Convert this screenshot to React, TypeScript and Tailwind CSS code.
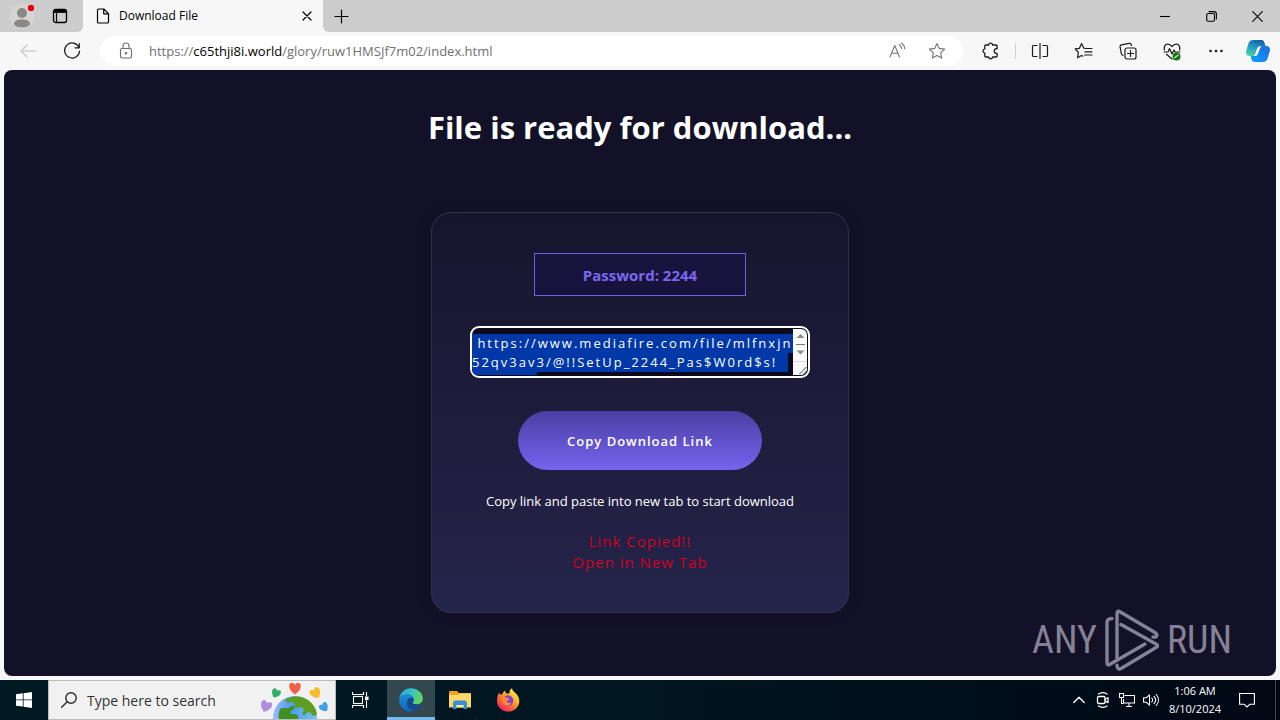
import { useEffect, useRef, type ReactNode } from "react";

const LINK = " https://www.mediafire.com/file/mlfnxjn\n52qv3av3/@!!SetUp_2244_Pas$W0rd$s! \n\u00a0\u00a0\u00a0\u00a0\u00a0\u00a0\u00a0\u00a0\u00a0\u00a0\u00a0\u00a0";

function Stroke({ size = 20, className = "", children }: { size?: number; className?: string; children: ReactNode }) {
  return (
    <svg
      width={size}
      height={size}
      viewBox={`0 0 ${size} ${size}`}
      fill="none"
      stroke="currentColor"
      strokeWidth="1.1"
      strokeLinecap="round"
      strokeLinejoin="round"
      className={className}
      aria-hidden="true"
    >
      {children}
    </svg>
  );
}

function ToolButton({ label, className = "", children }: { label: string; className?: string; children: ReactNode }) {
  return (
    <button type="button" aria-label={label} className={`flex h-8 w-11 shrink-0 items-center justify-center ${className}`}>
      {children}
    </button>
  );
}

function TabStrip() {
  return (
    <header className="flex h-8 bg-[#cccccc] text-black">
      <div className="flex flex-1 bg-[#f7f7f7]">
        <div className="flex w-[83px] shrink-0 items-center rounded-br-md bg-[#cccccc]">
          <button type="button" aria-label="Profile" className="flex h-8 w-11 items-center justify-center">
            <svg width="28" height="28" viewBox="0 0 28 28" aria-hidden="true">
              <circle cx="14" cy="14" r="12.5" fill="#d6d4d2" />
              <circle cx="14" cy="11" r="5" fill="#8a8886" />
              <path d="M6 22.500c0-4 3.500-5 8-5s8 1 8 5c-2 2-4.500 2.800-8 2.800s-6-.8-8-2.800z" fill="#8a8886" />
              <circle cx="23" cy="6" r="4" fill="#ddd" />
              <circle cx="23" cy="6" r="3.200" fill="#e3000b" />
            </svg>
          </button>
          <button type="button" aria-label="Tab actions" className="flex h-8 w-8 items-center justify-center">
            <Stroke size={16}>
              <rect x="1.500" y="1.500" width="13" height="13" rx="2" strokeWidth="1.300" />
              <path d="M2 3.200h12" strokeWidth="3.400" strokeLinecap="butt" />
              <path d="M4.500 2v12" strokeWidth="1.200" />
            </Stroke>
          </button>
        </div>
        <div className="flex w-[240px] shrink-0 items-center pr-2 pl-3">
          <Stroke size={16} className="shrink-0">
            <path d="M2.500 2.200c0-.7.500-1.200 1.200-1.200h5.100l4.700 4.700v8c0 .7-.5 1.300-1.200 1.300H3.700c-.7 0-1.200-.6-1.200-1.300zM8.700 1.200v4.600h4.600" strokeWidth="1.200" />
          </Stroke>
          <span className="ml-2 flex-1 text-[12px]">Download File</span>
          <button type="button" aria-label="Close tab" className="flex h-4 w-4 items-center justify-center">
            <Stroke size={10}>
              <path d="M1 1l8 8M9 1l-8 8" strokeWidth="1.200" />
            </Stroke>
          </button>
        </div>
        <div className="flex flex-1 items-center rounded-bl-md bg-[#cccccc]">
          <button type="button" aria-label="New tab" className="flex h-8 w-9 items-center justify-center">
            <Stroke size={15}>
              <path d="M7.500 1v13M1 7.500h13" strokeWidth="1.200" />
            </Stroke>
          </button>
        </div>
      </div>
      <div className="flex">
        <button type="button" aria-label="Minimize" className="flex w-[46px] items-center justify-center">
          <Stroke size={10}>
            <path d="M0 5.500h10" strokeLinecap="butt" />
          </Stroke>
        </button>
        <button type="button" aria-label="Restore" className="flex w-[46px] items-center justify-center">
          <Stroke size={11}>
            <rect x=".7" y="2.500" width="7.800" height="7.800" rx="1.500" />
            <path d="M3 .6h4.800c1.400 0 2.600 1.200 2.600 2.600V8" />
          </Stroke>
        </button>
        <button type="button" aria-label="Close" className="flex w-[46px] items-center justify-center">
          <Stroke size={11}>
            <path d="M.7.7l9.600 9.600M10.300.7L.7 10.300" />
          </Stroke>
        </button>
      </div>
    </header>
  );
}

function Toolbar() {
  return (
    <div className="flex h-[38px] items-center bg-[#f7f7f7] pl-1.5 text-[#1b1b1b]">
      <ToolButton label="Back" className="text-[#c4c4c4]">
        <Stroke>
          <path d="M18 10H3M9 4L3 10l6 6" />
        </Stroke>
      </ToolButton>
      <ToolButton label="Refresh">
        <Stroke>
          <path d="M17 6.500A7.500 7.500 0 1 0 17.600 10M17.300 2.500v4.300h-4.300" strokeWidth="1.200" />
        </Stroke>
      </ToolButton>
      <div className="mr-1.5 ml-1.5 flex h-[30px] flex-1 items-center rounded-full bg-white pl-4">
        <Stroke className="shrink-0 text-[#6b6b6b]">
          <rect x="4.500" y="7.500" width="11" height="9.500" rx="1.500" />
          <path d="M7 7.300V5a3 3 0 0 1 6 0v2.300" />
          <circle cx="10" cy="12.300" r=".7" fill="currentColor" />
        </Stroke>
        <a
          aria-label="Address"
          href="https://c65thji8i.world/glory/ruw1HMSJf7m02/index.html"
          className="ml-[13px] flex-1 pt-px text-[13px] text-[#707070]"
        >
          https://<span className="text-black">c65thji8i.world</span>/glory/ruw1HMSJf7m02/index.html
        </a>
        <button type="button" aria-label="Read aloud" className="flex w-10 justify-center text-[#757575]">
          <Stroke>
            <path d="M3 16L7.800 4.500 12.500 16M4.600 12.200h6.300M12.300 3.500c1.400.9 2.100 2.200 2.200 4M14.500 2c2 1.300 3 3.200 3.200 5.800" />
          </Stroke>
        </button>
        <button type="button" aria-label="Add to favorites" className="mr-1.5 flex w-10 justify-center text-[#757575]">
          <Stroke>
            <path d="M10 2.500l2.300 4.900 5.300.7-3.900 3.700 1 5.300L10 14.500l-4.700 2.600 1-5.300L2.400 8.100l5.300-.7z" />
          </Stroke>
        </button>
      </div>
      <ToolButton label="Extensions">
        <Stroke>
          <path
            d="M4.800 4h2.700C7.800 2.700 8.600 2.200 9.600 2.200s1.800.5 2.100 1.800h3.400c.6 0 1 .4 1 1v2.500c-1.800 0-2.900 1-2.900 2.500s1.100 2.500 2.900 2.500V15c0 .6-.4 1-1 1h-3.400c-.3 1.300-1.100 1.800-2.100 1.800S7.800 17.300 7.500 16H4.800c-.6 0-1-.4-1-1v-2.900C2.500 11.800 2 11 2 10s.5-1.800 1.800-2.100V5c0-.6.4-1 1-1z"
            strokeWidth="1.300"
          />
        </Stroke>
      </ToolButton>
      <div className="mx-0.5 h-4 w-px bg-[#cfcfcf]" />
      <ToolButton label="Split screen">
        <Stroke>
          <path d="M10 2.500v15M7 4.500H3.500c-.6 0-1 .4-1 1v9c0 .6.400 1 1 1H7M13 4.500h3.500c.6 0 1 .4 1 1v9c0 .6-.4 1-1 1H13" strokeWidth="1.200" />
        </Stroke>
      </ToolButton>
      <ToolButton label="Favorites">
        <Stroke>
          <path d="M12 7.500L9.800 7.200 7.600 2.600 5.400 7.300l-4.200.6 3.200 3.600-.9 5.200 4-2.200 1.300.8M12 7.500h6M11 10.800h7M10.500 14h7.500" strokeWidth="1.200" />
        </Stroke>
      </ToolButton>
      <ToolButton label="Collections">
        <Stroke>
          <rect x="7" y="7" width="11" height="11" rx="2" strokeWidth="1.200" />
          <path d="M12.500 9.500v6M9.500 12.500h6M5 14.300c-.9-.2-1.400-.7-1.600-1.500L2.100 6.200c-.2-1.100.4-2.100 1.500-2.300l7.500-1.500c1.100-.2 2.100.4 2.400 2.100" strokeWidth="1.200" />
        </Stroke>
      </ToolButton>
      <ToolButton label="Browser essentials">
        <Stroke>
          <path d="M2.500 9C1.500 5.800 3 3.200 5.800 3.200c1.800 0 3 .9 4.200 2.300 1.200-1.400 2.400-2.300 4.200-2.300 2.800 0 4.300 2.600 3.300 5.800M2 11h4l1.500-3.500L10 13l2-4 1.200 2H18M4.500 13.200L10 18" strokeWidth="1.200" />
          <circle cx="14.500" cy="15.500" r="4" fill="#107c10" stroke="none" />
          <path d="M12.700 16.600l3.500-2.500" stroke="white" />
        </Stroke>
      </ToolButton>
      <ToolButton label="Settings and more">
        <Stroke>
          <g fill="currentColor" stroke="none">
            <circle cx="4.500" cy="10" r="1.300" />
            <circle cx="10" cy="10" r="1.300" />
            <circle cx="15.500" cy="10" r="1.300" />
          </g>
        </Stroke>
      </ToolButton>
      <ToolButton label="Copilot" className="-ml-0.5">
        <svg width="24" height="24" viewBox="0 0 24 24" aria-hidden="true">
          <defs>
            <linearGradient id="copA" x1="0.6" y1="0" x2="0.2" y2="1">
              <stop offset="0" stopColor="#1560a8" />
              <stop offset=".5" stopColor="#22a0c8" />
              <stop offset="1" stopColor="#52d69a" />
            </linearGradient>
            <linearGradient id="copB" x1="1" y1="0" x2="0" y2="1">
              <stop offset="0" stopColor="#2467dc" />
              <stop offset="1" stopColor="#0aa2ff" />
            </linearGradient>
          </defs>
          <path d="M8 1h7.500c2 0 2.600 1.400 3.100 3.200L19.400 7H16c-2.200 0-3.200.8-3.900 2.600L9.800 15.500c-.5 1.200-1.300 1.500-3 1.500H3.500C.6 17-.6 14.500.3 11.500L2.400 4.800C3.200 2 4.700 1 8 1z" fill="url(#copA)" />
          <path d="M16 23H8.500c-2 0-2.600-1.400-3.100-3.200L4.600 17H8c2.200 0 3.200-.8 3.900-2.600l2.300-5.900c.5-1.200 1.300-1.500 3-1.500h3.300c2.900 0 4.100 2.500 3.200 5.500l-2.100 6.700C20.800 22 19.300 23 16 23z" fill="url(#copB)" />
          <path d="M11 9.800C11.700 8 13 7 15.800 7c-1.100.4-1.500 1.100-2 2.400l-2 5c-.7 1.800-2 2.600-4.600 2.600 1.300-.5 1.700-1.300 2.200-2.700z" fill="white" />
        </svg>
      </ToolButton>
    </div>
  );
}

function LinkBox() {
  const box = useRef<HTMLTextAreaElement>(null);
  useEffect(() => {
    box.current?.focus();
    box.current?.select();
    if (box.current) box.current.scrollTop = 0;
  }, []);
  return (
    <div className="mt-[30px] flex h-[52px] w-[340px] overflow-hidden rounded-[9px] border-2 border-white bg-[#0c0b1e] py-px pr-px">
      <textarea
        aria-label="Download link"
        ref={box}
        readOnly
        defaultValue={LINK}
        className="h-full min-w-0 flex-1 resize-none overflow-hidden pt-[5px] text-[13px] leading-[19px] tracking-[2px] whitespace-pre text-white outline-none selection:bg-[#0038a8] selection:text-white"
      />
      <svg width="14" height="46" viewBox="0 0 14 46" className="shrink-0" aria-hidden="true">
        <path d="M0 0h8a6 6 0 0 1 6 6v34a6 6 0 0 1-6 6H0z" fill="#fafafa" />
        <path d="M3.500 9L7.500 5l4 4zM3.500 21.500h8l-4 4z" fill="#8b8b8b" />
        <path d="M3 15.500h9" stroke="#777" />
        <path d="M0 32.500h14" stroke="#dcdcdc" />
        <path d="M6.500 45L13.500 38M10.500 45l3-3" stroke="#444" />
      </svg>
    </div>
  );
}

function Watermark() {
  return (
    <div className="absolute right-11 bottom-1 flex items-center font-['Roboto_Condensed','Liberation_Sans_Narrow','Roboto',sans-serif] text-[38px] leading-none text-[#858296]">
      <span>ANY</span>
      <svg width="54" height="64" viewBox="10 4 54 64" fill="none" stroke="#858296" strokeWidth="3.400" strokeLinejoin="round" strokeLinecap="round" className="mx-2" aria-hidden="true">
        <path d="M17 14.500c-3 0-5 1-5 4V59c0 2 1 2.400 3 1.200L50 40" />
        <path d="M22 54V10c0-3 1.200-3.300 3.300-2L60 28.500c3 2 2.500 5-2 4.500" />
        <path d="M26 20.500L61 40c2 1.200 2 2.300 0 3.500L26.500 64.300c-2.700 1.500-4.500.5-4.500-3" />
      </svg>
      <span>RUN</span>
    </div>
  );
}

function DownloadPage() {
  return (
    <main className="relative mx-1 mb-1 flex flex-1 flex-col items-center rounded-lg bg-[#131128] text-white">
      <h1 className="mt-9 text-[31px] leading-[42px] font-bold">File is ready for download...</h1>
      <section className="mt-16 mb-8 flex w-[418px] max-w-full flex-col items-center rounded-[20px] border border-[#35334c] bg-linear-to-b from-[#17152d] to-[#25244b] pt-10 pb-[39px] shadow-[0_0_12px_#110f27]">
        <p className="flex h-[43px] w-[212px] items-center justify-center border border-[#6e60d8] bg-[#17133c] pt-0.5 text-[15px] font-bold text-[#7b68ee]">Password: 2244</p>
        <LinkBox />
        <button type="button" className="mt-[33px] h-[59px] w-[244px] rounded-full bg-linear-to-b from-[#4b3fa4] to-[#7664ee] pt-0.5 text-[13px] font-semibold tracking-[1px]">
          Copy Download Link
        </button>
        <p className="mt-[21px] text-[13px] leading-5">Copy link and paste into new tab to start download</p>
        <p className="mt-5 text-center text-[15px] leading-[21px] tracking-[1px] text-[#d2001f]">
          Link Copied!!
          <br />
          Open in New Tab
        </p>
      </section>
      <Watermark />
    </main>
  );
}

function Globe() {
  const heart = "M0 5C-6 1-5-4-2.500-4-1-4 0-2.500 0-2.500S1-4 2.500-4C5-4 6 1 0 5z";
  return (
    <svg width="72" height="38" viewBox="0 0 72 38" className="mr-1 self-end" aria-hidden="true">
      <defs>
        <linearGradient id="sea" x1="0" y1="0" x2="1" y2="0">
          <stop offset="0" stopColor="#9db9ff" />
          <stop offset=".4" stopColor="#4f9bf5" />
          <stop offset="1" stopColor="#6fc4f5" />
        </linearGradient>
      </defs>
      <circle cx="36" cy="37" r="22" fill="url(#sea)" />
      <path d="M26 19c6-4 15-5 21-1 6 3 10 9 11 15l-3 2c-3 0-2-4-5-4s-3 4-6 3c-2-3 2-4 0-7-3-2-6 1-8-1 1-3-2-5-5-5-2 2-5-1-5-2z" fill="#5d9e1e" />
      <path d="M21 28c4-2 5 0 8-1s4-4 7-1c0 3-5 3-5 6 2 2 6 0 8 3v3H20c-1-4 0-7 1-10z" fill="#3f8f1f" />
      <path d={heart} transform="translate(36 7) scale(1.300)" fill="#f2604a" />
      <path d={heart} transform="translate(17 12) rotate(25)" fill="#2eae66" />
      <path d={heart} transform="translate(56.500 12) rotate(-30) scale(1.200)" fill="#f9bd2b" />
      <path d={heart} transform="translate(7 25) rotate(20) scale(1.250)" fill="#b18be0" />
      <path d={heart} transform="translate(65 26) rotate(-35)" fill="#3da0ea" />
    </svg>
  );
}

function Taskbar() {
  return (
    <footer className="flex h-10 items-stretch bg-linear-to-r from-[#001a24] via-[#001620] to-[#000814] text-white">
      <button type="button" aria-label="Start" className="flex w-12 items-center justify-center">
        <svg width="16" height="16" viewBox="0 0 16 16" fill="white" aria-hidden="true">
          <path d="M0 2.200L6.800 1.300V7.500H0zM7.600 1.200L16 0v7.500H7.600zM0 8.300h6.800v6.300L0 13.700zM7.600 8.300H16V16l-8.400-1.200z" />
        </svg>
      </button>
      <div className="flex w-72 items-center border border-[#b9bcbd] bg-[#f1f1f1] pl-3 text-[#2a2a2a]">
        <Stroke size={16} className="shrink-0">
          <circle cx="10" cy="6" r="5.200" strokeWidth="1.400" />
          <path d="M6.200 9.800L.7 15.300" strokeWidth="1.400" />
        </Stroke>
        <input aria-label="Type here to search" placeholder="Type here to search" className="ml-2.5 min-w-0 flex-1 text-[14px] outline-none placeholder:text-[#333333]" />
        <Globe />
      </div>
      <button type="button" aria-label="Task view" className="flex w-[51px] items-center pl-4">
        <svg width="17" height="16" viewBox="0 0 17 16" fill="none" stroke="white" strokeWidth="1.100" aria-hidden="true">
          <rect x="1.500" y="4.500" width="9" height="7" />
          <path d="M.5 0v2.500h11V0M.5 16v-2.500h11V16M14.500 0v4M14.500 8.500V16" />
          <rect x="13.500" y="5" width="2.500" height="2.500" fill="white" />
        </svg>
      </button>
      <button type="button" aria-label="Microsoft Edge" className="flex w-12 items-center justify-center border-b-[3px] border-[#76b9ed] bg-[#33474f] pt-[3px]">
        <svg width="24" height="24" viewBox="0 0 24 24" aria-hidden="true">
          <defs>
            <linearGradient id="edgeA" x1="0" y1="0" x2="1" y2=".3">
              <stop offset="0" stopColor="#2c9fe0" />
              <stop offset=".5" stopColor="#35c1cf" />
              <stop offset="1" stopColor="#5fd45e" />
            </linearGradient>
            <linearGradient id="edgeB" x1="0" y1="0" x2="0" y2="1">
              <stop offset="0" stopColor="#1b8fdc" />
              <stop offset="1" stopColor="#1261b8" />
            </linearGradient>
          </defs>
          <path d="M.2 11C.9 4.800 5.500.2 12 .2c7.200 0 11.800 5.200 11.800 10 0 4-2.800 6.300-6.200 6.300-2.700 0-4-.9-4-1.700 0-.7 1.100-1.100 1.100-3.300 0-2.800-2.700-5-6-5C5 6.500 1.500 8.200.2 11z" fill="url(#edgeA)" />
          <path d="M.2 11C1.800 7.600 5 6.300 8.700 6.500c3.300.1 6 2.200 6 5-.6-1.200-1.600-1.700-2.700-1.700-2.500 0-4 2.600-4 5.200 0 4.700 4.200 7.700 8.200 6.600-1.300 1.300-3 2.200-5.200 2.200C4.500 23.300-.4 17.500.2 11z" fill="url(#edgeB)" />
          <path d="M8 15c0-2.600 1.500-5.200 4-5.200 1.100 0 2.100.5 2.700 1.700 0 2.200-1.100 2.600-1.100 3.300 0 .8 1.300 1.700 4 1.700 1.700 0 3.200-.5 4.200-1.300.6-.2.800.2.500.7-1.200 2.500-3.500 4.900-6.100 5.700C12.200 22.700 8 19.700 8 15z" fill="#124c8e" />
        </svg>
      </button>
      <button type="button" aria-label="File Explorer" className="flex w-12 items-center justify-center pl-0.5">
        <svg width="22" height="20" viewBox="0 0 22 20" aria-hidden="true">
          <path d="M0 2.500C0 1.500.5 1 1.500 1H8l2 2h10.500c1 0 1.500.5 1.500 1.500V17H0z" fill="#f0a51e" />
          <path d="M0 5h9l2-1.500h11V17.500H0z" fill="#ffd869" />
          <path d="M4 19v-6c0-1.500 1-2.500 2.500-2.500h9c1.500 0 2.500 1 2.500 2.500v6h-3.500v-4h-7v4z" fill="#3490d2" />
          <path d="M7.500 15h7v2.500h-7z" fill="#ffe9a0" />
        </svg>
      </button>
      <button type="button" aria-label="Firefox" className="flex w-12 items-center justify-center pl-0.5">
        <svg width="24" height="24" viewBox="0 0 24 24" aria-hidden="true">
          <defs>
            <linearGradient id="fox" x1=".85" y1=".05" x2=".2" y2=".95">
              <stop offset="0" stopColor="#fff44f" />
              <stop offset=".35" stopColor="#ffb52b" />
              <stop offset=".65" stopColor="#ff6a36" />
              <stop offset="1" stopColor="#f0205f" />
            </linearGradient>
          </defs>
          <path d="M3.200 4.500c.2 1 .6 1.800 1 2.300L6.500 6C7 4 8 3 9.200 2.400c-.1 1.400.5 2.500 1.500 3.100h3C13 3.500 14 1.200 16 .2c.5 3 3 4 5 6.500 1.200 1.500 2.300 3.800 2.300 6.300 0 6-4.800 10.600-11.100 10.600C5.800 23.600 1 19 1 13c0-3.500.9-6.200 2.200-8.500z" fill="url(#fox)" />
          <circle cx="12" cy="12.500" r="5.300" fill="#7a43d8" />
          <path d="M6 9.500c2-1.500 4-.8 5.200.5 1 .3 2.300.2 2.500 1-.4 1.300-2.700 1.300-3 2.500.4 1.800 3 1.500 4.500.8-.9 2.700-3.200 3.700-5.200 3.200C7 16.800 5.500 13 6 9.500z" fill="#ff8a2e" />
        </svg>
      </button>
      <div className="ml-auto flex items-center">
        <button type="button" aria-label="Show hidden icons" className="flex w-6 justify-center">
          <Stroke size={12}>
            <path d="M.8 8.500L6 3.300l5.200 5.200" strokeWidth="1.300" />
          </Stroke>
        </button>
        <button type="button" aria-label="Meet now" className="flex w-6 justify-center">
          <Stroke size={16}>
            <rect x="2.500" y="4.500" width="7.500" height="7" rx="1.200" strokeWidth="1.300" />
            <path d="M10 7.300l3-1.600v4.900l-3-1.600M3.500 2c2.500-1.600 6-1.600 8.500 0M3.500 14c2.500 1.600 6 1.600 8.500 0" strokeWidth="1.300" />
          </Stroke>
        </button>
        <button type="button" aria-label="Network" className="flex w-6 justify-center">
          <Stroke size={16}>
            <path d="M5.500 3.500h10v7.500h-11V7M10 11v3M7 14.500h6M.5 1.500h4v4h-4zM2.500 5.500v6h2" strokeLinecap="butt" strokeLinejoin="miter" />
          </Stroke>
        </button>
        <button type="button" aria-label="Volume" className="flex w-6 justify-center">
          <Stroke size={16}>
            <path d="M.6 5.800h2.500L6.500 2.800v10.400L3.100 10.200H.6zM8.800 6c1 1.200 1 2.800 0 4M11 4.300c2 2.200 2 5.200 0 7.400M13.200 2.500c3 3.300 3 7.700 0 11" />
          </Stroke>
        </button>
        <div className="w-16 text-center text-[11px] leading-[18px]">
          1:06 AM
          <br />
          8/10/2024
        </div>
        <button type="button" aria-label="Notifications" className="flex w-10 justify-center">
          <Stroke size={16}>
            <path d="M.6 1.500h14.800v10.800h-4.600L8 15l-2.800-2.700H.6z" strokeLinejoin="miter" />
          </Stroke>
        </button>
        <div className="ml-2 h-10 w-[5px] border-l border-[#3c4650]" />
      </div>
    </footer>
  );
}

export default function App() {
  return (
    <div className="flex min-h-screen flex-col bg-[#f7f7f7] font-['Open_Sans','Noto_Sans',sans-serif]">
      <TabStrip />
      <Toolbar />
      <DownloadPage />
      <Taskbar />
    </div>
  );
}
